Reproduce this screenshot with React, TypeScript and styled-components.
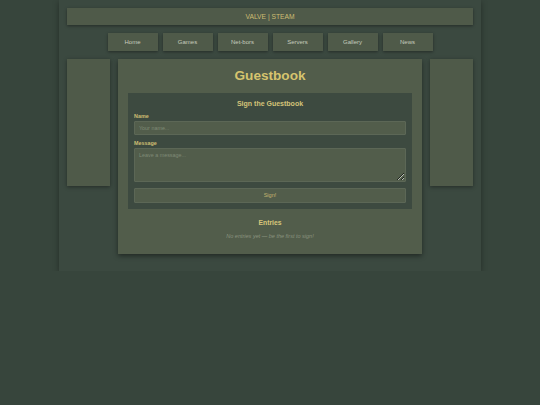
import styled, { createGlobalStyle } from "styled-components";

const GlobalStyle = createGlobalStyle`
  html, body {
    margin: 0;
    padding: 0;
    background: #37453c;
    font-family: "Liberation Sans", Arial, sans-serif;
  }
`;

const Page = styled.div`
  width: 406px;
  margin: 0 auto;
  padding: 8px 8px 17px;
  background: #3b4940;
  box-shadow: 0 2px 6px rgba(0, 0, 0, 0.35);
`;

const Header = styled.div`
  height: 17px;
  line-height: 17px;
  text-align: center;
  background: #4f5a49;
  color: #cdbd72;
  font-size: 6.7px;
  box-shadow: 0 1px 3px rgba(0, 0, 0, 0.4);
`;

const Nav = styled.nav`
  display: flex;
  justify-content: center;
  gap: 5px;
  margin-top: 8px;
`;

const NavButton = styled.a`
  width: 50px;
  height: 18px;
  line-height: 18px;
  text-align: center;
  background: #4f5a49;
  color: #c6ccbe;
  font-size: 6px;
  box-shadow: 0 1px 3px rgba(0, 0, 0, 0.4);
  cursor: pointer;
`;

const Columns = styled.div`
  display: flex;
  gap: 8px;
  align-items: flex-start;
  margin-top: 8px;
`;

const Side = styled.aside`
  width: 43px;
  height: 127px;
  flex-shrink: 0;
  background: #4f5a49;
  box-shadow: 0 1px 4px rgba(0, 0, 0, 0.4);
`;

const Main = styled.main`
  flex: 1;
  padding: 8px 10px 13px;
  background: #525d4b;
  box-shadow: 0 2px 5px rgba(0, 0, 0, 0.45);
`;

const Title = styled.h1`
  margin: 0 0 9px;
  line-height: 17px;
  font-size: 13.6px;
  font-weight: 700;
  text-align: center;
  color: #d6c46e;
`;

const FormBox = styled.form`
  padding: 6px 6px 6.5px;
  background: #3d4a40;
  display: flex;
  flex-direction: column;
`;

const SubTitle = styled.h2`
  margin: 0;
  line-height: 9px;
  font-size: 7px;
  font-weight: 700;
  text-align: center;
  color: #d4c479;
`;

const Label = styled.label<{ $top: number }>`
  display: block;
  margin-top: ${({ $top }) => $top}px;
  line-height: 8px;
  font-size: 5.4px;
  font-weight: 700;
  color: #cdbd72;
`;

const Input = styled.input`
  box-sizing: border-box;
  width: 100%;
  height: 14px;
  margin-top: 1px;
  padding: 0 4px;
  border: 1px solid #5c6756;
  border-radius: 1px;
  background: #525d4b;
  font-family: inherit;
  font-size: 5.4px;
  color: #d8ded3;
  outline: none;
  &::placeholder {
    color: #7f8a76;
  }
`;

const TextArea = styled.textarea`
  box-sizing: border-box;
  display: block;
  width: 100%;
  height: 34px;
  margin-top: 1px;
  padding: 3px 4px;
  border: 1px solid #5c6756;
  border-radius: 1px;
  background: #525d4b;
  font-family: inherit;
  font-size: 5.4px;
  color: #d8ded3;
  outline: none;
  resize: vertical;
  &::placeholder {
    color: #7f8a76;
  }
`;

const Submit = styled.button`
  height: 14.5px;
  margin-top: 6px;
  padding: 0;
  border: 1px solid #5c6756;
  border-radius: 1px;
  background: #525d4b;
  font-family: inherit;
  font-size: 5.6px;
  color: #c4b470;
  cursor: pointer;
`;

const EntriesTitle = styled.h3`
  margin: 10px 0 0;
  line-height: 8px;
  font-size: 6.8px;
  font-weight: 700;
  text-align: center;
  color: #d6c67a;
`;

const Empty = styled.p`
  margin: 5px 0 0;
  line-height: 9px;
  font-size: 5.5px;
  font-style: italic;
  text-align: center;
  color: #8a937f;
`;

const links = ["Home", "Games", "Net-bors", "Servers", "Gallery", "News"];

const App = () => {
  return (
    <>
      <GlobalStyle />
      <Page>
        <Header>VALVE | STEAM</Header>
        <Nav>
          {links.map((l) => (
            <NavButton key={l}>{l}</NavButton>
          ))}
        </Nav>
        <Columns>
          <Side />
          <Main>
            <Title>Guestbook</Title>
            <FormBox onSubmit={(e) => e.preventDefault()}>
              <SubTitle>Sign the Guestbook</SubTitle>
              <Label $top={4}>Name</Label>
              <Input placeholder="Your name..." />
              <Label $top={4}>Message</Label>
              <TextArea placeholder="Leave a message..." />
              <Submit type="submit">Sign!</Submit>
            </FormBox>
            <EntriesTitle>Entries</EntriesTitle>
            <Empty>No entries yet — be the first to sign!</Empty>
          </Main>
          <Side />
        </Columns>
      </Page>
    </>
  );
};

export default App;
